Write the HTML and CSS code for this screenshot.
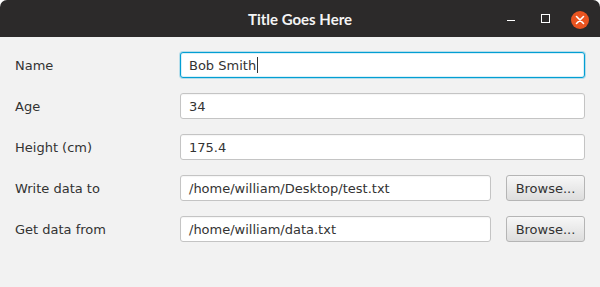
FILE: index.html
```html
<!DOCTYPE html>
<html lang="en">
<head>
    <meta charset="UTF-8">
    <title>Title Goes Here</title>
    <link rel="stylesheet" href="styles.css">
</head>
<body>
    <div class="window">
        <header class="titlebar">
            <span class="title">Title Goes Here</span>
            <div class="controls">
                <span class="ctl minimize"></span>
                <span class="ctl maximize"></span>
                <span class="ctl close">
                    <svg width="10" height="10" viewBox="0 0 10 10">
                        <path d="M1.5 1.5 L8.5 8.5 M8.5 1.5 L1.5 8.5" stroke="#fff" stroke-width="1.6" stroke-linecap="round"/>
                    </svg>
                </span>
            </div>
        </header>

        <div class="form">
            <label>Name</label>
            <div class="field wide focused">Bob Smith<span class="caret"></span></div>

            <label>Age</label>
            <div class="field wide">34</div>

            <label>Height (cm)</label>
            <div class="field wide">175.4</div>

            <label>Write data to</label>
            <div class="field">/home/william/Desktop/test.txt</div>
            <button>Browse...</button>

            <label>Get data from</label>
            <div class="field">/home/william/data.txt</div>
            <button>Browse...</button>
        </div>
    </div>
</body>
</html>
```

FILE: styles.css
```css
* {
    margin: 0;
    padding: 0;
    box-sizing: border-box;
}

body {
    background: #fff;
    font-family: 'DejaVu Sans', sans-serif;
    font-size: 13px;
    color: #333;
}

.window {
    width: 600px;
    height: 287px;
    background: #f2f2f2;
    border-radius: 7px 7px 0 0;
    overflow: hidden;
}

.titlebar {
    height: 37px;
    background: #2c2a2a;
    display: flex;
    align-items: center;
    justify-content: center;
    position: relative;
}

.title {
    font-family: 'Lato', sans-serif;
    font-weight: bold;
    font-size: 15px;
    color: #f4f4f4;
    margin-top: 1px;
}

.controls {
    position: absolute;
    right: 11px;
    top: 0;
    height: 37px;
    display: flex;
    align-items: center;
}

.ctl {
    display: flex;
    align-items: center;
    justify-content: center;
}

.minimize {
    width: 8px;
    height: 1px;
    background: #fff;
    margin-top: 4px;
}

.maximize {
    width: 9px;
    height: 9px;
    border: 1px solid #fff;
    margin-left: 26px;
    margin-top: -1px;
}

.close {
    width: 18px;
    height: 18px;
    border-radius: 50%;
    background: #e95420;
    margin-left: 21px;
    margin-top: 3px;
}

.form {
    display: grid;
    grid-template-columns: 150px 1fr auto;
    column-gap: 15px;
    row-gap: 15px;
    padding: 15px 15px 0 15px;
    align-items: center;
}

.form label {
    color: #333;
}

.field {
    height: 26px;
    background: #fff;
    border: 1px solid #c4c4c4;
    border-radius: 3px;
    padding: 0 8px;
    display: flex;
    align-items: center;
    color: #333;
    box-shadow: inset 0 1px 1px rgba(0, 0, 0, 0.04);
    white-space: nowrap;
}

.wide {
    grid-column: 2 / 4;
}

.focused {
    border-color: #039ed3;
    box-shadow: 0 0 0 1px rgba(3, 158, 211, 0.25), inset 0 0 0 1px rgba(3, 158, 211, 0.15);
}

.caret {
    display: inline-block;
    width: 1px;
    height: 16px;
    background: #333;
    margin-left: 1px;
}

button {
    width: 79px;
    height: 26px;
    font-family: 'DejaVu Sans', sans-serif;
    font-size: 13px;
    color: #333;
    background: linear-gradient(#f7f7f7, #dddddd);
    border: 1px solid #b5b5b5;
    border-radius: 3px;
}
```
